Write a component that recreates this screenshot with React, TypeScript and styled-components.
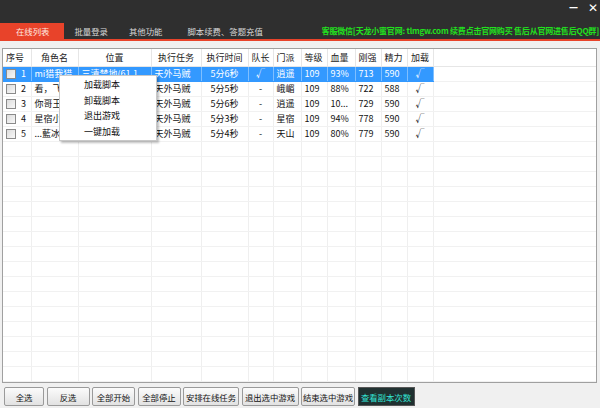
import React from 'react';
import styled, { createGlobalStyle } from 'styled-components';

type Row = {
    id: number;
    name: string;
    pos: string;
    task: string;
    time: string;
    leader: string;
    sect: string;
    level: string;
    hp: string;
    strong: string;
    energy: string;
    loaded: string;
};

const rows: Row[] = [
    { id: 1, name: 'mi猎我猎', pos: '三清禁地(61,1...', task: '天外马贼', time: '5分6秒', leader: '√', sect: '逍遥', level: '109', hp: '93%', strong: '713', energy: '590', loaded: '√' },
    { id: 2, name: '看，飞...', pos: '', task: '天外马贼', time: '5分5秒', leader: '-', sect: '峨嵋', level: '109', hp: '88%', strong: '722', energy: '588', loaded: '√' },
    { id: 3, name: '你哥王...', pos: '', task: '天外马贼', time: '5分6秒', leader: '-', sect: '逍遥', level: '109', hp: '10...', strong: '729', energy: '590', loaded: '√' },
    { id: 4, name: '星宿小...', pos: '', task: '天外马贼', time: '5分3秒', leader: '-', sect: '星宿', level: '109', hp: '94%', strong: '778', energy: '590', loaded: '√' },
    { id: 5, name: '...藍冰...', pos: '', task: '天外马贼', time: '5分4秒', leader: '-', sect: '天山', level: '109', hp: '80%', strong: '779', energy: '590', loaded: '√' },
];

const columns = [
    { title: '序号', width: 28, align: 'left' },
    { title: '角色名', width: 47, align: 'left' },
    { title: '位置', width: 73, align: 'left' },
    { title: '执行任务', width: 50, align: 'left' },
    { title: '执行时间', width: 47, align: 'center' },
    { title: '队长', width: 25, align: 'center' },
    { title: '门派', width: 28, align: 'left' },
    { title: '等级', width: 26, align: 'left' },
    { title: '血量', width: 28, align: 'left' },
    { title: '刚强', width: 26, align: 'left' },
    { title: '精力', width: 26, align: 'left' },
    { title: '加载', width: 26, align: 'center' },
];

const tabs = ['在线列表', '批量登录', '其他功能', '脚本续费、答题充值'];
const buttons = [
    { label: '全选', w: 40 },
    { label: '反选', w: 43 },
    { label: '全部开始', w: 43 },
    { label: '全部停止', w: 43 },
    { label: '安排在线任务', w: 56 },
    { label: '退出选中游戏', w: 57 },
    { label: '结束选中游戏', w: 54 },
];
const menuItems = ['加载脚本', '卸载脚本', '退出游戏', '一键加载'];

const GlobalStyle = createGlobalStyle`
    html, body {
        margin: 0;
        padding: 0;
        width: 600px;
        height: 408px;
        overflow: hidden;
        background: #f0f0f0;
        font-family: 'Noto Sans CJK SC', 'DejaVu Sans', sans-serif;
    }
`;

const App = () => {
    const emptyRows = Array.from({ length: 16 });
    return (
        <>
            <GlobalStyle />
            <Window>
                <TitleBar>
                    <WinControls>
                        <WinBtn>—</WinBtn>
                        <WinBtn big>✕</WinBtn>
                    </WinControls>
                    <TabRow>
                        {tabs.map((t, i) => (
                            <Tab key={t} active={i === 0}>{t}</Tab>
                        ))}
                        <Notice>客服微信[天龙小蜜官网: tlmgw.com 续费点击官网购买 售后从官网进售后QQ群]</Notice>
                    </TabRow>
                </TitleBar>
                <RedLine />
                <Body>
                    <TableBox>
                        <Grid>
                            <colgroup>
                                {columns.map(c => <col key={c.title} style={{ width: c.width }} />)}
                                <col />
                            </colgroup>
                            <thead>
                                <tr>
                                    {columns.map(c => (
                                        <HeadCell key={c.title} align={c.align as 'left' | 'center'}>{c.title}</HeadCell>
                                    ))}
                                    <HeadFiller />
                                </tr>
                            </thead>
                            <tbody>
                                {rows.map((r, i) => {
                                    const sel = i === 0;
                                    const vals = [r.name, r.pos, r.task, r.time, r.leader, r.sect, r.level, r.hp, r.strong, r.energy, r.loaded];
                                    return (
                                        <tr key={r.id}>
                                            <Cell selected={sel} align="left">
                                                <IdWrap>
                                                    <Check />
                                                    <span>{r.id}</span>
                                                </IdWrap>
                                            </Cell>
                                            {vals.map((v, j) => (
                                                <Cell key={j} selected={sel} align={columns[j + 1].align as 'left' | 'center'}>{v}</Cell>
                                            ))}
                                            <Filler />
                                        </tr>
                                    );
                                })}
                                {emptyRows.map((_, i) => (
                                    <tr key={'e' + i}>
                                        {columns.map(c => <Cell key={c.title} align="left" />)}
                                        <Filler />
                                    </tr>
                                ))}
                            </tbody>
                        </Grid>
                        <Menu>
                            {menuItems.map(m => <MenuItem key={m}>{m}</MenuItem>)}
                        </Menu>
                    </TableBox>
                    <ButtonBar>
                        {buttons.map(b => <Btn key={b.label} w={b.w}>{b.label}</Btn>)}
                        <DarkBtn>查看副本次数</DarkBtn>
                    </ButtonBar>
                </Body>
            </Window>
        </>
    );
};

const Window = styled.div`
    width: 600px;
    height: 408px;
    display: flex;
    flex-direction: column;
    background: #f0f0f0;
`;

const TitleBar = styled.div`
    height: 39px;
    background: #2f2f2f;
    position: relative;
    display: flex;
    flex-direction: column;
    justify-content: flex-end;
`;

const WinControls = styled.div`
    position: absolute;
    top: 0;
    right: 2px;
    display: flex;
    gap: 10px;
    align-items: center;
    height: 15px;
`;

const WinBtn = styled.span<{ big?: boolean }>`
    color: #ffffff;
    font-family: 'DejaVu Sans', sans-serif;
    font-size: ${p => (p.big ? '12px' : '9px')};
    font-weight: bold;
    line-height: 1;
`;

const TabRow = styled.div`
    display: flex;
    align-items: flex-end;
    height: 16px;
`;

const Tab = styled.div<{ active: boolean }>`
    height: 16px;
    padding: 0 ${p => (p.active ? '15px 0 16px' : '10px')};
    margin-right: 1px;
    background: ${p => (p.active ? '#e8432a' : 'transparent')};
    color: ${p => (p.active ? '#ffe9e0' : '#d8d8d8')};
    font-size: 8.4px;
    line-height: 16px;
    white-space: nowrap;
    &:nth-child(1) { padding: 0 14px 0 16px; }
    &:nth-child(2) { padding: 0 10px; }
    &:nth-child(3) { padding: 0 11px 0 10px; }
    &:nth-child(4) { padding: 0 10px 0 13px; }
`;

const Notice = styled.div`
    flex: 1;
    text-align: right;
    color: #22e01e;
    font-size: 8px;
    font-weight: bold;
    line-height: 16px;
    white-space: nowrap;
    overflow: hidden;
    padding-right: 1px;
    letter-spacing: -0.2px;
`;

const RedLine = styled.div`
    height: 2px;
    background: #e8432a;
`;

const Body = styled.div`
    flex: 1;
    display: flex;
    flex-direction: column;
    padding: 7px 3px 2px 2px;
    gap: 4px;
    min-height: 0;
`;

const TableBox = styled.div`
    position: relative;
    flex: 1;
    background: #ffffff;
    border: 1px solid #a0a0a0;
    overflow: hidden;
`;

const Grid = styled.table`
    border-collapse: collapse;
    table-layout: fixed;
    width: 100%;
    font-size: 9px;
    color: #111;
`;

const HeadCell = styled.th<{ align: 'left' | 'center' }>`
    height: 17px;
    padding: 0 3px;
    font-weight: normal;
    text-align: ${p => (p.align === 'left' ? 'left' : 'center')};
    border-right: 1px solid #e6e6e6;
    border-bottom: 1px solid #e6e6e6;
    white-space: nowrap;
    overflow: hidden;
    color: #222;
    &:nth-child(2), &:nth-child(3), &:nth-child(4) { text-align: center; }
`;

const HeadFiller = styled.th`
    border-bottom: 1px solid #e6e6e6;
`;

const Cell = styled.td<{ selected?: boolean; align: 'left' | 'center' }>`
    height: 14px;
    padding: 0 3px;
    text-align: ${p => p.align};
    white-space: nowrap;
    overflow: hidden;
    text-overflow: clip;
    line-height: 14px;
    background: ${p => (p.selected ? '#3399ff' : 'transparent')};
    color: ${p => (p.selected ? '#ffffff' : '#111')};
    border-right: 1px solid ${p => (p.selected ? '#7fbfff' : '#efefef')};
    border-bottom: 1px solid ${p => (p.selected ? '#3399ff' : '#f1f1f1')};
`;

const Filler = styled.td`
    border-bottom: 1px solid #f1f1f1;
`;

const IdWrap = styled.div`
    display: flex;
    align-items: center;
    gap: 5px;
`;

const Check = styled.span`
    width: 8px;
    height: 8px;
    border: 1px solid #8a8a8a;
    background: linear-gradient(135deg, #dcdcdc, #f8f8f8);
    flex-shrink: 0;
`;

const Menu = styled.div`
    position: absolute;
    left: 56px;
    top: 26px;
    width: 96px;
    padding: 1px 0;
    background: #ffffff;
    border: 1px solid #c8c8c8;
    box-shadow: 2px 2px 2px rgba(0, 0, 0, 0.25);
    display: flex;
    flex-direction: column;
`;

const MenuItem = styled.div`
    height: 15.5px;
    line-height: 15.5px;
    padding-left: 24px;
    font-size: 9px;
    color: #111;
`;

const ButtonBar = styled.div`
    display: flex;
    gap: 2.5px;
    height: 19px;
    padding-left: 2px;
`;

const Btn = styled.button<{ w: number }>`
    width: ${p => p.w}px;
    padding: 0;
    height: 19px;
    border: 1px solid #9a9a9a;
    border-radius: 2px;
    background: linear-gradient(#fbfbfb, #e2e2e2);
    font-family: 'Noto Sans CJK SC', sans-serif;
    font-size: 8.4px;
    color: #111;
    white-space: nowrap;
`;

const DarkBtn = styled.button`
    width: 57px;
    height: 19px;
    padding: 0;
    border: 1px solid #555;
    background: #1f3030;
    color: #33e6d6;
    font-family: 'Noto Sans CJK SC', sans-serif;
    font-size: 8.4px;
    white-space: nowrap;
`;

export default App;
